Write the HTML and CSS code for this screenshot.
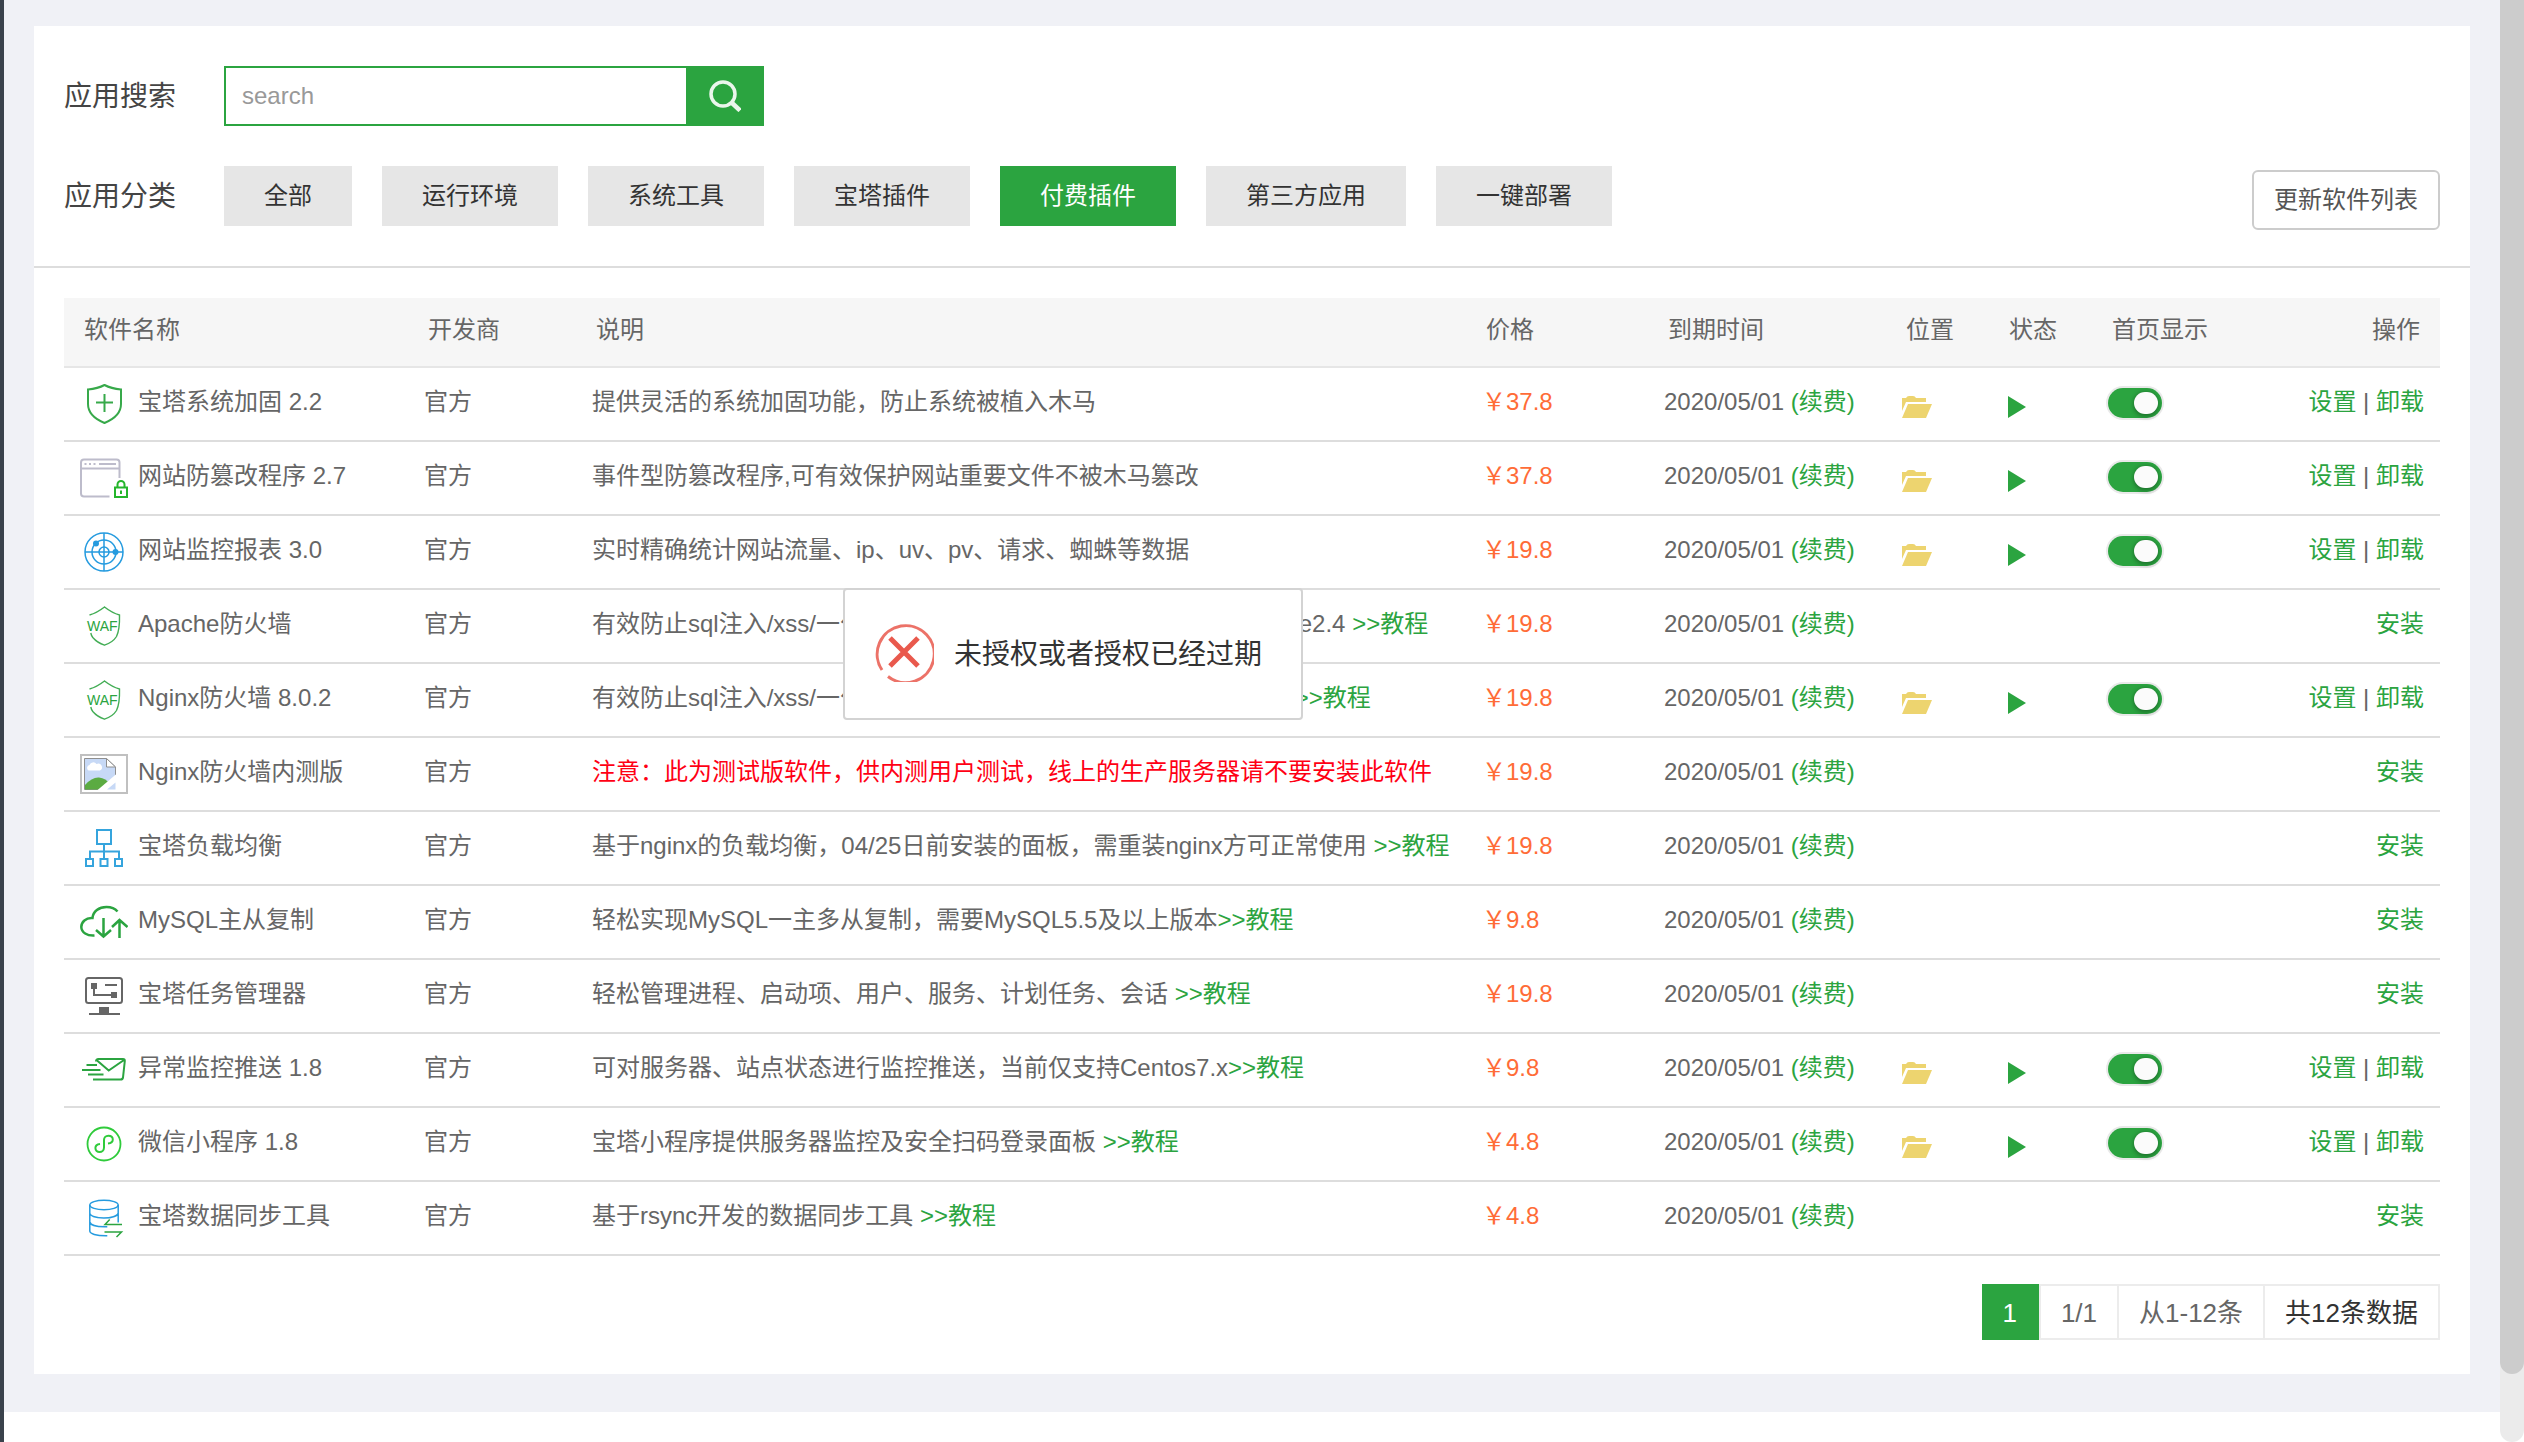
FILE: index.html
```html
<!DOCTYPE html>
<html lang="zh-CN">
  <head>
    <meta charset="utf-8">
    <title>软件管理</title>
    <link rel="stylesheet" href="styles.css">
  </head>
  <body>
    <!-- shared icons -->
    <svg class="sprite" aria-hidden="true">
      <symbol id="folder" viewBox="0 0 30 22">
        <path fill="#edd46f" d="M0 2h4q1-2 3-2h4q2 0 3 2h10v4H4L0 15z"/>
        <path fill="#edd46f" d="M6 8h24l-6 14H0z"/>
      </symbol>
      <symbol id="play" viewBox="0 0 18 22">
        <path fill="#2ba440" d="M0 0l18 11L0 22z"/>
      </symbol>
    </svg>

    <div class="sidebar"></div>
    <main class="main">
      <div class="content">
        <div class="panel">
          <div class="filters">
            <form class="filter-row">
              <label class="filter-label" for="searchInput">应用搜索</label>
              <input type="text" id="searchInput" class="search-input" placeholder="search">
              <button type="submit" class="search-btn" aria-label="搜索">
                <svg width="32" height="32" viewBox="0 0 32 32" fill="none" stroke="#eaf6ec" stroke-width="3.500">
                  <circle cx="14" cy="14" r="12"/>
                  <path stroke-width="4.500" d="M22.500 22.500l8.500 8"/>
                </svg>
              </button>
            </form>
            <div class="filter-row">
              <span class="filter-label">应用分类</span>
              <div class="tabs">
                <button class="tab">全部</button>
                <button class="tab">运行环境</button>
                <button class="tab">系统工具</button>
                <button class="tab">宝塔插件</button>
                <button class="tab active">付费插件</button>
                <button class="tab">第三方应用</button>
                <button class="tab">一键部署</button>
              </div>
              <button class="update-btn">更新软件列表</button>
            </div>
          </div>

          <div class="list">
            <table class="soft-table">
              <colgroup>
                <col class="col-name">
                <col class="col-dev">
                <col>
                <col class="col-price">
                <col class="col-date">
                <col class="col-icon">
                <col class="col-icon">
                <col class="col-home">
                <col class="col-action">
              </colgroup>
              <thead>
                <tr>
                  <th>软件名称</th>
                  <th>开发商</th>
                  <th>说明</th>
                  <th>价格</th>
                  <th>到期时间</th>
                  <th>位置</th>
                  <th>状态</th>
                  <th>首页显示</th>
                  <th class="action">操作</th>
                </tr>
              </thead>
              <tbody>
                <tr>
                  <td>
                    <div class="name">
                      <svg class="icon" viewBox="0 0 48 40" fill="none" stroke="#37a94a" stroke-width="2">
                        <path d="M24.500 1C19 4 13.500 5 8 5.500V20c0 9.500 8 15.500 16.500 19C33 35.500 41 29.500 41 20V5.500C35.500 5 30 4 24.500 1zM24.500 10v18M16 18.500h17"/>
                      </svg>
                      宝塔系统加固 2.2
                    </div>
                  </td>
                  <td>官方</td>
                  <td>提供灵活的系统加固功能，防止系统被植入木马</td>
                  <td class="price">￥37.8</td>
                  <td>2020/05/01 <a href="#">(续费)</a></td>
                  <td><a href="#" class="mark" aria-label="位置"><svg width="30" height="22"><use href="#folder"/></svg></a></td>
                  <td><a href="#" class="mark state" aria-label="状态"><svg width="18" height="22"><use href="#play"/></svg></a></td>
                  <td><input type="checkbox" class="switch" aria-label="首页显示" checked></td>
                  <td class="action"><a href="#">设置</a> | <a href="#">卸载</a></td>
                </tr>
                <tr>
                  <td>
                    <div class="name">
                      <svg class="icon" viewBox="0 0 48 40" fill="none" stroke="#bdbccb" stroke-width="2">
                        <path d="M29.500 38.500H4q-3 0-3-3V4.500q0-3 3-3h32.500q3 0 3 3V20M1 10.500h38.500"/>
                        <path d="M4.500 6h2M9 6h2M13.500 6h2M19 6h17"/>
                        <path stroke="#25b52b" d="M35 29.500h12V39H35zM37.500 29v-2.500a3.500 3.500 0 0 1 7 0V29M41 32.500v3.500"/>
                      </svg>
                      网站防篡改程序 2.7
                    </div>
                  </td>
                  <td>官方</td>
                  <td>事件型防篡改程序,可有效保护网站重要文件不被木马篡改</td>
                  <td class="price">￥37.8</td>
                  <td>2020/05/01 <a href="#">(续费)</a></td>
                  <td><a href="#" class="mark" aria-label="位置"><svg width="30" height="22"><use href="#folder"/></svg></a></td>
                  <td><a href="#" class="mark state" aria-label="状态"><svg width="18" height="22"><use href="#play"/></svg></a></td>
                  <td><input type="checkbox" class="switch" aria-label="首页显示" checked></td>
                  <td class="action"><a href="#">设置</a> | <a href="#">卸载</a></td>
                </tr>
                <tr>
                  <td>
                    <div class="name">
                      <svg class="icon" viewBox="0 0 48 40" fill="none" stroke="#259bdf" stroke-width="1.500">
                        <circle cx="24" cy="20" r="19"/>
                        <circle cx="24" cy="20" r="12"/>
                        <circle cx="24" cy="20" r="5"/>
                        <path d="M24 1v38M5 20h38"/>
                        <circle cx="16" cy="11.500" r="3" fill="#259bdf" stroke="none"/>
                        <circle cx="35.500" cy="20" r="3" fill="#259bdf" stroke="none"/>
                      </svg>
                      网站监控报表 3.0
                    </div>
                  </td>
                  <td>官方</td>
                  <td>实时精确统计网站流量、ip、uv、pv、请求、蜘蛛等数据</td>
                  <td class="price">￥19.8</td>
                  <td>2020/05/01 <a href="#">(续费)</a></td>
                  <td><a href="#" class="mark" aria-label="位置"><svg width="30" height="22"><use href="#folder"/></svg></a></td>
                  <td><a href="#" class="mark state" aria-label="状态"><svg width="18" height="22"><use href="#play"/></svg></a></td>
                  <td><input type="checkbox" class="switch" aria-label="首页显示" checked></td>
                  <td class="action"><a href="#">设置</a> | <a href="#">卸载</a></td>
                </tr>
                <tr>
                  <td>
                    <div class="name">
                      <svg class="icon" viewBox="0 0 48 40">
                        <path fill="none" stroke="#43ad55" stroke-width="1.400" d="M9.500 9C15 7.500 20 4.500 24.500 1 29 4.500 34 7.500 39.500 9c.2 8.500-.3 16-3 21.500-2.500 4-7 7-12 8.700-5-1.700-9-4.500-11.700-7.700-1.200-1.500-1.700-3-2-4.500"/>
                        <text class="waf" x="7" y="25">WAF</text>
                      </svg>
                      Apache防火墙
                    </div>
                  </td>
                  <td>官方</td>
                  <td>有效防止sql注入/xss/一句话木马等常见渗透攻击,当前仅支持Apache2.4 <a href="#">&gt;&gt;教程</a></td>
                  <td class="price">￥19.8</td>
                  <td>2020/05/01 <a href="#">(续费)</a></td>
                  <td></td>
                  <td></td>
                  <td></td>
                  <td class="action"><a href="#">安装</a></td>
                </tr>
                <tr>
                  <td>
                    <div class="name">
                      <svg class="icon" viewBox="0 0 48 40">
                        <path fill="none" stroke="#43ad55" stroke-width="1.400" d="M9.500 9C15 7.500 20 4.500 24.500 1 29 4.500 34 7.500 39.500 9c.2 8.500-.3 16-3 21.500-2.500 4-7 7-12 8.700-5-1.700-9-4.500-11.700-7.700-1.200-1.500-1.700-3-2-4.500"/>
                        <text class="waf" x="7" y="25">WAF</text>
                      </svg>
                      Nginx防火墙 8.0.2
                    </div>
                  </td>
                  <td>官方</td>
                  <td>有效防止sql注入/xss/一句话木马等常见渗透攻击,当前仅支持nginx <a href="#">&gt;&gt;教程</a></td>
                  <td class="price">￥19.8</td>
                  <td>2020/05/01 <a href="#">(续费)</a></td>
                  <td><a href="#" class="mark" aria-label="位置"><svg width="30" height="22"><use href="#folder"/></svg></a></td>
                  <td><a href="#" class="mark state" aria-label="状态"><svg width="18" height="22"><use href="#play"/></svg></a></td>
                  <td><input type="checkbox" class="switch" aria-label="首页显示" checked></td>
                  <td class="action"><a href="#">设置</a> | <a href="#">卸载</a></td>
                </tr>
                <tr>
                  <td>
                    <div class="name">
                      <svg class="icon" viewBox="0 0 48 40">
                        <path fill="#fff" stroke="#c0c0c0" stroke-width="2" d="M1 1h46v38H1z"/>
                        <path fill="#c7d9f6" stroke="#8f8f8f" d="M4.500 4.500h22l9 8.500v22.500h-31z"/>
                        <path fill="#fff" stroke="#8f8f8f" d="M26.500 4.500V13h9z"/>
                        <path fill="#fff" d="M8.500 16.500a3 3 0 0 1 1-5.500 4 4 0 0 1 7-1 3.500 3.500 0 0 1 3.500 6.500z"/>
                        <path fill="#5bab42" d="M5 35.500V31q7-8 14-7.500 7 .5 11 7v5z"/>
                        <path fill="#fff" d="M17 36.500L37 19.500v17z"/>
                        <path fill="#c7d9f6" d="M27 35.500l8.500-7v7z"/>
                      </svg>
                      Nginx防火墙内测版
                    </div>
                  </td>
                  <td>官方</td>
                  <td class="warn">注意：此为测试版软件，供内测用户测试，线上的生产服务器请不要安装此软件</td>
                  <td class="price">￥19.8</td>
                  <td>2020/05/01 <a href="#">(续费)</a></td>
                  <td></td>
                  <td></td>
                  <td></td>
                  <td class="action"><a href="#">安装</a></td>
                </tr>
                <tr>
                  <td>
                    <div class="name">
                      <svg class="icon" viewBox="0 0 48 40" fill="none" stroke="#35a4dd" stroke-width="2">
                        <path d="M17 2h14v14H17zM24 16v14M10 30v-6.500h29V30M6 31h7v7H6zM20.500 31h7v7h-7zM35 31h7v7h-7z"/>
                      </svg>
                      宝塔负载均衡
                    </div>
                  </td>
                  <td>官方</td>
                  <td>基于nginx的负载均衡，04/25日前安装的面板，需重装nginx方可正常使用 <a href="#">&gt;&gt;教程</a></td>
                  <td class="price">￥19.8</td>
                  <td>2020/05/01 <a href="#">(续费)</a></td>
                  <td></td>
                  <td></td>
                  <td></td>
                  <td class="action"><a href="#">安装</a></td>
                </tr>
                <tr>
                  <td>
                    <div class="name">
                      <svg class="icon" viewBox="0 0 48 40" fill="none" stroke="#2ba440" stroke-width="2.500">
                        <path d="M14.500 33.500C7 34 1.500 30.500 1.300 25c0-5 4.500-9.500 11.200-9 .5-6.500 6.500-11 14-11 4.500 0 8.500 1.500 11 4.500"/>
                        <path d="M23.500 16v18M16 28l7.500 6.500L31 28M39.500 36V18M32 25l7.500-7 8 7"/>
                      </svg>
                      MySQL主从复制
                    </div>
                  </td>
                  <td>官方</td>
                  <td>轻松实现MySQL一主多从复制，需要MySQL5.5及以上版本<a href="#">&gt;&gt;教程</a></td>
                  <td class="price">￥9.8</td>
                  <td>2020/05/01 <a href="#">(续费)</a></td>
                  <td></td>
                  <td></td>
                  <td></td>
                  <td class="action"><a href="#">安装</a></td>
                </tr>
                <tr>
                  <td>
                    <div class="name">
                      <svg class="icon" viewBox="0 0 48 40" fill="none" stroke="#666" stroke-width="2">
                        <rect x="6" y="2" width="36" height="25" rx="2.500"/>
                        <path d="M14 12v7h18M25 9h12M9 38h31"/>
                        <path fill="#666" stroke="none" d="M11 7h6v6h-6zM31 16h6v6h-6zM19 31h10v6H19z"/>
                      </svg>
                      宝塔任务管理器
                    </div>
                  </td>
                  <td>官方</td>
                  <td>轻松管理进程、启动项、用户、服务、计划任务、会话 <a href="#">&gt;&gt;教程</a></td>
                  <td class="price">￥19.8</td>
                  <td>2020/05/01 <a href="#">(续费)</a></td>
                  <td></td>
                  <td></td>
                  <td></td>
                  <td class="action"><a href="#">安装</a></td>
                </tr>
                <tr>
                  <td>
                    <div class="name">
                      <svg class="icon" viewBox="0 0 48 40" fill="none" stroke="#2ba440" stroke-width="2">
                        <path d="M16 11.500q0-2.500 2.500-2.500H43q2 0 1.800 2l-1.800 16.500q-.3 2-2.500 2H13M16.500 10l12.200 10.500L44 10M6.500 15H17M2 20h18.500M8 24.500h15.500"/>
                      </svg>
                      异常监控推送 1.8
                    </div>
                  </td>
                  <td>官方</td>
                  <td>可对服务器、站点状态进行监控推送，当前仅支持Centos7.x<a href="#">&gt;&gt;教程</a></td>
                  <td class="price">￥9.8</td>
                  <td>2020/05/01 <a href="#">(续费)</a></td>
                  <td><a href="#" class="mark" aria-label="位置"><svg width="30" height="22"><use href="#folder"/></svg></a></td>
                  <td><a href="#" class="mark state" aria-label="状态"><svg width="18" height="22"><use href="#play"/></svg></a></td>
                  <td><input type="checkbox" class="switch" aria-label="首页显示" checked></td>
                  <td class="action"><a href="#">设置</a> | <a href="#">卸载</a></td>
                </tr>
                <tr>
                  <td>
                    <div class="name">
                      <svg class="icon" viewBox="0 0 48 40" fill="none" stroke="#2fcb3b" stroke-width="1.800">
                        <circle cx="24" cy="20" r="16.500"/>
                        <path d="M28 19.500c3-.3 4.800-2 4.800-4 0-2.300-2-3.700-4.400-3.700-2.700 0-4.400 1.900-4.400 4.200v7.500c0 2.600-2 4.500-4.400 4.500s-4.200-1.600-4.200-3.900c0-2.100 1.700-3.800 4.600-4.100" stroke-width="2"/>
                      </svg>
                      微信小程序 1.8
                    </div>
                  </td>
                  <td>官方</td>
                  <td>宝塔小程序提供服务器监控及安全扫码登录面板 <a href="#">&gt;&gt;教程</a></td>
                  <td class="price">￥4.8</td>
                  <td>2020/05/01 <a href="#">(续费)</a></td>
                  <td><a href="#" class="mark" aria-label="位置"><svg width="30" height="22"><use href="#folder"/></svg></a></td>
                  <td><a href="#" class="mark state" aria-label="状态"><svg width="18" height="22"><use href="#play"/></svg></a></td>
                  <td><input type="checkbox" class="switch" aria-label="首页显示" checked></td>
                  <td class="action"><a href="#">设置</a> | <a href="#">卸载</a></td>
                </tr>
                <tr>
                  <td>
                    <div class="name">
                      <svg class="icon" viewBox="0 0 48 40" fill="none" stroke="#259bdf" stroke-width="1.500">
                        <ellipse cx="24" cy="7" rx="14.200" ry="4.800"/>
                        <path d="M9.800 7v26c0 2.500 6 5 17.500 4.800M38.200 7v17.500M9.800 15c1 6.500 27 6.500 28.400 0M9.800 24c.8 3.500 8 5 17.500 4.700"/>
                        <path stroke="#2ba440" d="M42 26.500H25l4.700-5M24.500 34H41.500l-5 5"/>
                      </svg>
                      宝塔数据同步工具
                    </div>
                  </td>
                  <td>官方</td>
                  <td>基于rsync开发的数据同步工具 <a href="#">&gt;&gt;教程</a></td>
                  <td class="price">￥4.8</td>
                  <td>2020/05/01 <a href="#">(续费)</a></td>
                  <td></td>
                  <td></td>
                  <td></td>
                  <td class="action"><a href="#">安装</a></td>
                </tr>
              </tbody>
            </table>

            <div class="pager">
              <span class="current">1</span>
              <span class="pages">1/1</span>
              <span>从1-12条</span>
              <span class="total">共12条数据</span>
            </div>
          </div>
        </div>
      </div>
    </main>
    <div class="scrollbar"><div class="thumb"></div></div>

    <div class="message" role="alert">
      <svg width="60" height="60" viewBox="0 0 60 60" fill="none" stroke="#e9594d">
        <path stroke-width="3" d="M14 54.500A28.500 28.500 0 1 0 8 48" opacity=".85"/>
        <path stroke-width="5" d="M16 16l28 28M44 16L16 44"/>
      </svg>
      <span>未授权或者授权已经过期</span>
    </div>
  </body>
</html>
```
FILE: styles.css
```css
* {
  box-sizing: border-box;
}
body {
  display: flex;
  min-height: 100vh;
  margin: 0;
  position: relative;
  background-color: #ffffff;
  font-family: "Liberation Sans", "Noto Sans CJK SC", sans-serif;
  font-size: 24px;
  line-height: 36px;
  color: #666666;
}
button,
input {
  font-family: inherit;
  font-size: 24px;
}
button {
  cursor: pointer;
}
a {
  color: #2ba440;
  text-decoration: none;
}
.sprite {
  position: absolute;
  width: 0;
  height: 0;
}
.sidebar {
  width: 4px;
  background-color: #3a424c;
}
.main {
  flex: 1;
  min-width: 0;
}
.content {
  padding: 26px 30px 38px;
  background-color: #f0f1f6;
}
.panel {
  background-color: #ffffff;
}

/* search and categories */
.filters {
  display: flex;
  flex-direction: column;
  gap: 40px;
  padding: 40px 30px;
  border-bottom: 2px solid #dddddd;
}
.filter-row {
  display: flex;
  align-items: center;
  height: 60px;
}
.filter-label {
  width: 160px;
  padding-top: 2px;
  font-size: 28px;
  color: #444444;
}
.search-input {
  width: 462px;
  height: 60px;
  padding: 0 16px;
  border: 2px solid #2ba440;
  border-right: 0;
  outline: none;
}
.search-input::placeholder {
  color: #999999;
}
.search-btn {
  display: flex;
  align-items: center;
  justify-content: center;
  width: 78px;
  height: 60px;
  padding: 0;
  border: 0;
  background-color: #2ba440;
}
.tabs {
  display: flex;
  gap: 30px;
}
.tab {
  height: 60px;
  padding: 0 40px 5px;
  border: 0;
  background-color: #e6e6e6;
  color: #333333;
}
.tab.active {
  background-color: #2ba440;
  color: #ffffff;
}
.update-btn {
  height: 60px;
  margin: 8px 0 0 auto;
  padding: 0 20px 5px;
  border: 2px solid #cccccc;
  border-radius: 6px;
  background-color: #ffffff;
  color: #555555;
}

/* software list */
.list {
  padding: 30px 30px 34px;
}
.soft-table {
  width: 100%;
  table-layout: fixed;
  border-collapse: separate;
  border-spacing: 0;
}
.col-name {
  width: 344px;
}
.col-dev {
  width: 168px;
}
.col-price {
  width: 182px;
}
.col-date {
  width: 238px;
}
.col-icon {
  width: 103px;
}
.col-home {
  width: 160px;
}
.col-action {
  width: 188px;
}
th {
  height: 70px;
  padding: 14px 20px 16px;
  background-color: #f6f6f6;
  border-bottom: 2px solid #e6e6e6;
  font-weight: normal;
  text-align: left;
  vertical-align: top;
}
td {
  height: 74px;
  padding: 16px;
  border-bottom: 2px solid #dddddd;
  vertical-align: top;
  white-space: nowrap;
}
.action {
  text-align: right;
}
.name {
  display: flex;
  gap: 10px;
}
.icon {
  width: 48px;
  height: 40px;
}
.waf {
  font-size: 14px;
  fill: #2ba440;
}
.price {
  color: #ff6c37;
}
.warn {
  color: #ff0014;
}
.mark {
  display: block;
  height: 22px;
  margin-top: 12px;
}
.mark svg {
  display: block;
}
.state {
  padding-left: 3px;
}
.switch {
  display: block;
  appearance: none;
  width: 54px;
  height: 30px;
  margin: 4px 0 0;
  padding: 4px;
  border-radius: 15px;
  background-color: #2ba440;
  box-shadow: 0 0 0 2px #e9e9e9;
}
.switch::before {
  content: "";
  display: block;
  width: 24px;
  height: 22px;
  margin-left: auto;
  border-radius: 11px;
  background-color: #fbfbfb;
  box-shadow: 0 4px 4px rgba(0, 0, 0, 0.15), 0 0 4px rgba(0, 0, 0, 0.3);
}

/* pagination */
.pager {
  display: flex;
  justify-content: flex-end;
  margin-top: 28px;
  font-size: 26px;
}
.pager span {
  height: 56px;
  padding: 0 20px;
  border: 2px solid #ececec;
  border-left: 0;
  line-height: 54px;
}
.pager .current {
  border-color: #2ba440;
  background-color: #2ba440;
  color: #ffffff;
}
.pager .pages {
  border-left: 2px solid #ececec;
}
.pager .total {
  color: #333333;
}

.scrollbar {
  width: 24px;
  background-color: #ebebeb;
  border-radius: 0 0 12px 12px;
}
.thumb {
  height: 1374px;
  border-radius: 0 0 12px 12px;
  background-color: #cccccc;
}

/* message box over the list */
.message {
  position: absolute;
  top: 588px;
  left: 843px;
  display: flex;
  align-items: center;
  gap: 20px;
  height: 132px;
  padding: 0 39px 0 29px;
  border: 2px solid #d3d3d3;
  border-radius: 4px;
  background-color: #ffffff;
  font-size: 28px;
  color: #333333;
}
.message svg {
  margin-bottom: 5px;
}
.message span {
  padding-top: 2px;
}
```
